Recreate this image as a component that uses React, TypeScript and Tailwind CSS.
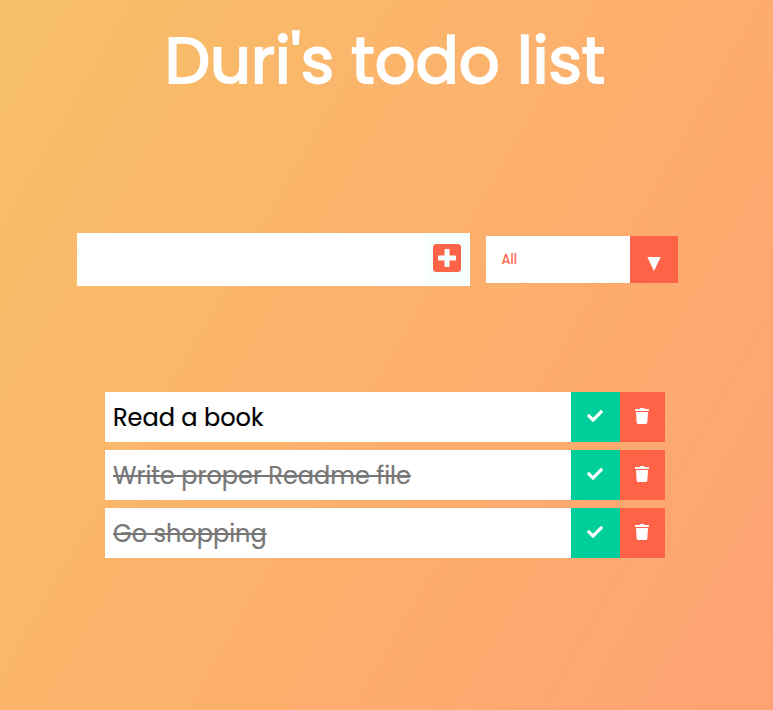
import { FaCheck, FaTrash, FaPlusSquare } from "react-icons/fa";

const todos = [
  { text: "Read a book", done: false },
  { text: "Write proper Readme file", done: true },
  { text: "Go shopping", done: true },
];

export default function App() {
  return (
    <div className="h-[710px] w-full overflow-hidden bg-[linear-gradient(120deg,#f7c068,#fbb56b_37%,#fdac6e_65%,#fea274)] font-['Poppins','Inter',sans-serif]">
      <header className="flex h-[120px] justify-center pr-[3px]">
        <h1 className="text-[64px] leading-[122px] font-normal whitespace-nowrap text-white [-webkit-text-stroke:2px_white]">Duri's todo list</h1>
      </header>
      <form className="mt-[113px] ml-[77px] flex h-[53px] items-center">
        <div className="flex h-[53px] w-[393px] justify-end bg-white">
          <button type="button" aria-label="Add" className="flex w-11 items-center justify-center bg-[#f7fffe] pr-[2px] pb-[3px]">
            <FaPlusSquare size={32} color="#ff6347" />
          </button>
        </div>
        <div className="ml-4 flex h-[47px] w-[192px] bg-white">
          <span className="flex-1 pl-[15.5px] text-[13.333px] leading-[47px] text-[#ff6347] [-webkit-text-stroke:0.2px_#ff6347]">All</span>
          <span className="flex w-12 items-center justify-center bg-[#ff6347] pt-[8px] pr-px text-white">
            <svg width="14" height="14" viewBox="0 0 14 14" preserveAspectRatio="none" fill="currentColor"><path d="M.3 0h13.4L7 14z" /></svg>
          </span>
        </div>
      </form>
      <ul className="mt-[106px] ml-[105px] flex w-[560px] flex-col gap-2">
        {todos.map((t) => (
          <li key={t.text} className="flex h-[50px] bg-white">
            <span className={t.done ? "flex-1 pl-2 text-2xl leading-[52px] text-[#777777] line-through decoration-2 [-webkit-text-stroke:0.2px_#777777]" : "flex-1 pl-2 text-2xl leading-[52px] text-black [-webkit-text-stroke:0.2px_black]"}>{t.text}</span>
            <span className="flex w-[49px] items-center justify-center bg-[#00cf9c] pr-px pb-[2px] text-white"><FaCheck size={16} /></span>
            <span className="flex w-[45px] items-center justify-center bg-[#ff6347] pr-px pb-[2px] text-white"><FaTrash size={16} /></span>
          </li>
        ))}
      </ul>
    </div>
  );
}
